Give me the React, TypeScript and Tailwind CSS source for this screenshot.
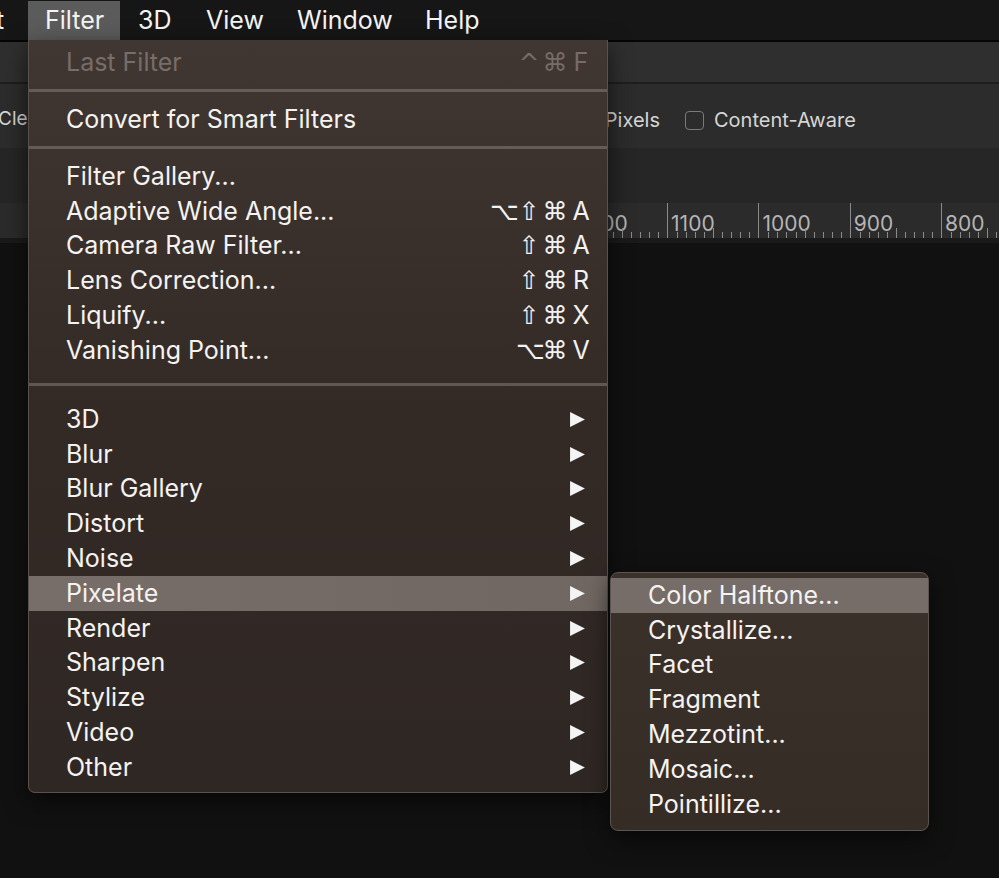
import React from 'react';

const FONT = { fontFamily: 'Inter, "Liberation Sans", sans-serif' };
const SYM_FONT = { fontFamily: '"DejaVu Sans", Inter, sans-serif' };

type Item = { label: string; keys?: string; sub?: boolean; disabled?: boolean; active?: boolean };

const GROUPS: (Item[] | 'sep' | 'bigsep')[] = [
  [{ label: 'Last Filter', keys: '^⌘F', disabled: true }],
  'sep',
  [{ label: 'Convert for Smart Filters' }],
  'sep',
  [
    { label: 'Filter Gallery...' },
    { label: 'Adaptive Wide Angle...', keys: '⌥⇧⌘A' },
    { label: 'Camera Raw Filter...', keys: '⇧⌘A' },
    { label: 'Lens Correction...', keys: '⇧⌘R' },
    { label: 'Liquify...', keys: '⇧⌘X' },
    { label: 'Vanishing Point...', keys: '⌥⌘V' },
  ],
  'bigsep',
  [
    { label: '3D', sub: true },
    { label: 'Blur', sub: true },
    { label: 'Blur Gallery', sub: true },
    { label: 'Distort', sub: true },
    { label: 'Noise', sub: true },
    { label: 'Pixelate', sub: true, active: true },
    { label: 'Render', sub: true },
    { label: 'Sharpen', sub: true },
    { label: 'Stylize', sub: true },
    { label: 'Video', sub: true },
    { label: 'Other', sub: true },
  ],
];

const PIXELATE = ['Color Halftone...', 'Crystallize...', 'Facet', 'Fragment', 'Mezzotint...', 'Mosaic...', 'Pointillize...'];

// only the labels right of the menu are ever visible
const RULER = ['', '', '', '', '', '', '1200', '1100', '1000', '900', '800', '700'];

function Arrow() {
  return (
    <svg width="17" height="17" viewBox="0 0 16 16" className="shrink-0">
      <path d="M1 1 L15 8 L1 15 Z" fill="#f4f4f4" />
    </svg>
  );
}

function Keys({ keys, dim }: { keys: string; dim?: boolean }) {
  const chars = keys.split('');
  return (
    <div className={`flex items-center ${dim ? 'text-[#766c68]' : 'text-[#f2f2f2]'}`}>
      {chars.map((k, i) =>
        i === chars.length - 1 ? (
          <span key={i} className="w-[26px] text-center text-[25px] leading-none">{k}</span>
        ) : (
          <span key={i} className="w-[26px] text-center text-[25px] leading-none" style={SYM_FONT}>{k}</span>
        )
      )}
    </div>
  );
}

function Row({ item }: { item: Item }) {
  return (
    <div
      className={`flex h-[34.8px] items-center justify-between pl-[37px] pr-[13px] ${
        item.active ? 'bg-gradient-to-r from-[#786e69] to-[#716762]' : ''
      }`}
    >
      <span className={`text-[25px] leading-none ${item.disabled ? 'text-[#776d69]' : 'text-[#f5f3f2]'}`}>{item.label}</span>
      {item.keys && <Keys keys={item.keys} dim={item.disabled} />}
      {item.sub && <span className="pr-[8px]"><Arrow /></span>}
    </div>
  );
}

function Ruler() {
  return (
    <div className="flex h-[35px] overflow-hidden bg-[#2b2b2b] pl-[28px]">
      {RULER.map((n, idx) => (
        <div key={idx} className="relative h-full w-[91.3px] shrink-0 border-l border-[#8a8a8a]">
          {n && <span className="absolute left-[3px] top-[10px] text-[21px] leading-none text-[#b4b4b4]">{n}</span>}
          <div className="absolute bottom-0 left-0 flex w-full">
            {Array.from({ length: 10 }).map((_, i) => (
              <div key={i} className="flex h-[10px] w-[9.13px] items-end">
                {i > 0 && <div className={`w-px bg-[#8a8a8a] ${i === 5 ? 'h-[10px]' : 'h-[6px]'}`} />}
              </div>
            ))}
          </div>
        </div>
      ))}
    </div>
  );
}

export default function App() {
  return (
    <div className="relative h-[878px] w-[999px] overflow-hidden bg-[#111111]" style={FONT}>
      {/* Menu bar */}
      <div className="flex h-[40px] items-center bg-[#161616] pt-[1px] text-[25px] text-[#f4f4f4]">
        <span className="-ml-[4px] w-[32px]">t</span>
        <span className="flex h-full w-[92px] items-center bg-[#5b5b5b] pl-[17px]">Filter</span>
        <span className="ml-[18px] w-[68px]">3D</span>
        <span className="w-[91px]">View</span>
        <span className="w-[128px]">Window</span>
        <span>Help</span>
      </div>
      <div className="h-[2px] bg-[#050505]" />

      {/* App panels behind the menu */}
      <div className="h-[40px] bg-[#2f2f2f]" />
      <div className="h-[2px] bg-[#1e1e1e]" />
      <div className="flex h-[64px] items-center bg-[#2c2c2c] pt-[8px] text-[20px] text-[#d6d6d6]">
        <div className="flex w-[660px] justify-between">
          <span className="-ml-[2px] text-[19px]">Clear</span>
          <span>Delete Cropped Pixels</span>
        </div>
        <span className="ml-[25px] h-[19px] w-[19px] rounded-[4px] border-[1.5px] border-[#7a7a7a]" />
        <span className="ml-[10px]">Content-Aware</span>
      </div>
      <div className="h-[55px] bg-[#262626]" />
      <Ruler />
      <div className="h-[5px] bg-[#1a1a1a]" />

      {/* Filter menu */}
      <div className="absolute left-[28px] top-[40px] w-[580px] rounded-b-[7px] border border-t-0 border-[#5a514c] bg-gradient-to-b from-[#403632] via-[#332a26] to-[#2f2723] pb-[7px] pt-[5px] shadow-[0_8px_24px_rgba(0,0,0,0.6)]">
        {GROUPS.map((g, i) => {
          if (g === 'sep')
            return (
              <div key={i} className="flex h-[22.2px] items-center">
                <div className="h-[3px] w-full bg-[#655b57]" />
              </div>
            );
          if (g === 'bigsep')
            return (
              <div key={i} className="flex h-[34.2px] items-center">
                <div className="h-[3px] w-full bg-[#605753]" />
              </div>
            );
          return g.map((item) => <Row key={item.label} item={item} />);
        })}
      </div>

      {/* Pixelate submenu */}
      <div className="absolute left-[610px] top-[572px] w-[319px] rounded-[8px] border border-[#5c5450] bg-gradient-to-b from-[#3b312b] to-[#352c26] pb-[8px] pt-[5px] shadow-[0_8px_24px_rgba(0,0,0,0.6)]">
        {PIXELATE.map((label, i) => (
          <div
            key={label}
            className={`flex h-[34.8px] items-center pl-[37px] text-[25px] leading-none text-[#f5f3f2] ${
              i === 0 ? 'bg-[#776d68]' : ''
            }`}
          >
            {label}
          </div>
        ))}
      </div>
    </div>
  );
}
